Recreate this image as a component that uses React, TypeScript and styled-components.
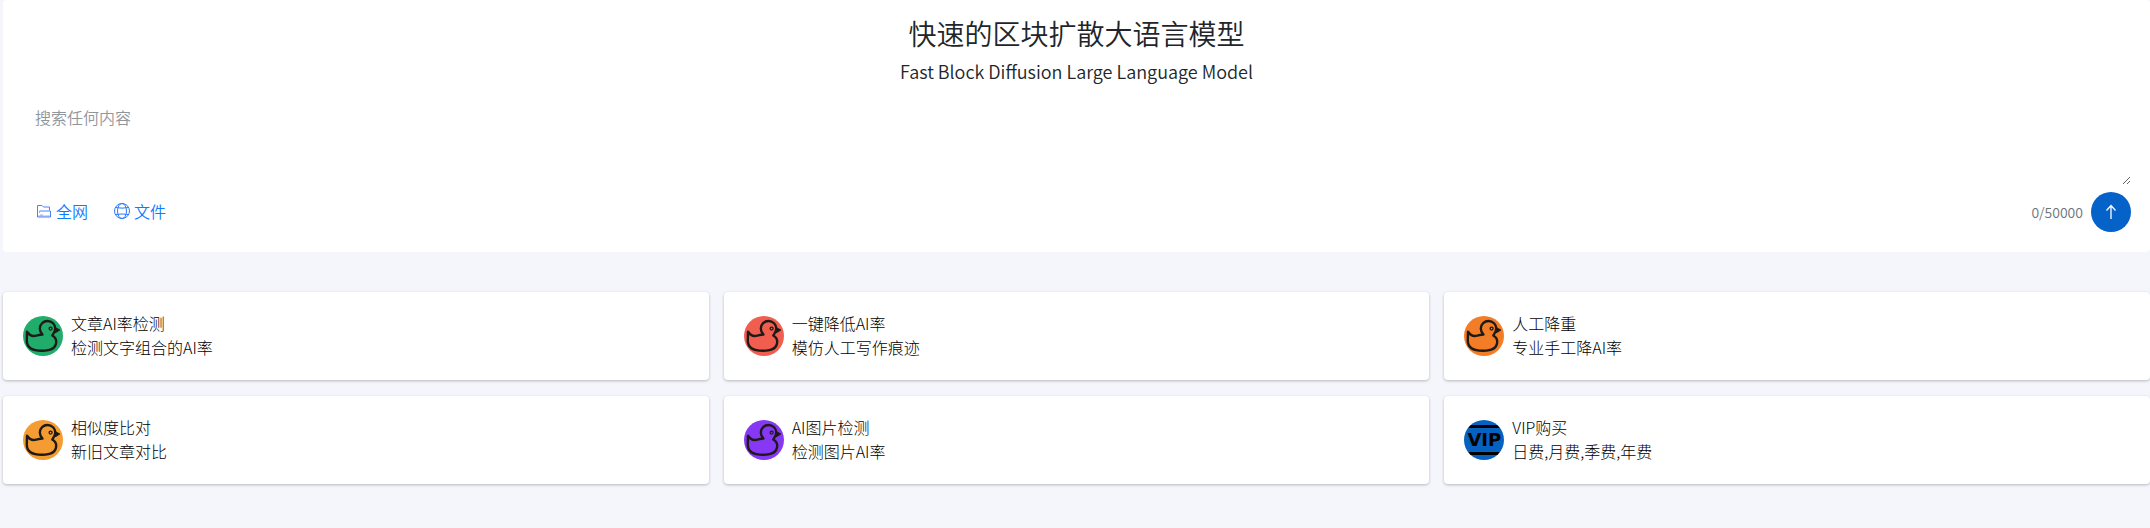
import React, { useState } from "react";
import styled, { createGlobalStyle } from "styled-components";

const GlobalStyle = createGlobalStyle`
  *, *::before, *::after { box-sizing: border-box; }
  body {
    margin: 0;
    background: #f4f6fb;
    color: #212529;
    font-family: "Noto Sans CJK SC", "Noto Sans", sans-serif;
    font-size: 16px;
    font-weight: 350;
    line-height: 24px;
  }
`;

const Page = styled.main`
  padding-left: 3px;
  padding-bottom: 40px;
`;

const SearchPanel = styled.form`
  padding: 13px 19px 20px;
  background: #fff;
  border-radius: 4px;
`;

const Title = styled.h1`
  margin: 0;
  font-size: 28px;
  font-weight: 350;
  line-height: 40px;
  text-align: center;
`;

const Subtitle = styled.p`
  margin: 4px 0 0;
  font-size: 18px;
  line-height: 28px;
  text-align: center;
`;

const Query = styled.textarea`
  display: block;
  width: 100%;
  height: 86px;
  margin: 14px 0 7px;
  padding: 6px 13px;
  border: 0;
  outline: 0;
  background: transparent;
  color: inherit;
  font: inherit;
  resize: vertical;
  &::placeholder { color: #90969c; opacity: 1; }
`;

const Toolbar = styled.div`
  display: flex;
  align-items: center;
  padding-left: 14px;
`;

const Source = styled.a`
  display: flex;
  align-items: center;
  gap: 4px;
  margin-right: 26px;
  padding-bottom: 2px;
  color: #0d7cff;
  text-decoration: none;
`;

const Counter = styled.span`
  margin-left: auto;
  margin-right: 8px;
  color: #6c757d;
  font-size: 14px;
`;

const Send = styled.button`
  display: flex;
  align-items: center;
  justify-content: center;
  width: 40px;
  height: 40px;
  padding: 0;
  border: 0;
  border-radius: 50%;
  background: #0562c9;
  color: #fff;
`;

const Services = styled.nav`
  display: grid;
  grid-template-columns: repeat(3, 1fr);
  gap: 16px 15px;
  margin-top: 40px;
`;

const Card = styled.a`
  display: flex;
  align-items: center;
  gap: 8px;
  padding: 19px 20px 21px;
  border-radius: 4px;
  background: #fff;
  box-shadow: 0 1px 3px rgba(0, 0, 0, 0.26);
  color: #000;
  font-weight: 300;
  text-decoration: none;

  > :first-child { margin-top: 2px; }
`;

const CardText = styled.div`
  display: flex;
  flex-direction: column;
`;

const FolderIcon = () => (
  <svg width="16" height="16" viewBox="0 0 16 16" fill="none" stroke="#4c83fb" aria-hidden="true">
    <path d="M1.500 14V2.500h4.500l1.500 1.500h6v3.500M3.500 8h11v6H1.500" strokeLinejoin="round" />
    <path d="M3.500 8v2M4 12h3M2 13h12" strokeOpacity=".6" />
  </svg>
);

const GlobeIcon = () => (
  <svg width="16" height="16" viewBox="0 0 16 16" fill="none" stroke="#2f78fa" aria-hidden="true">
    <circle cx="8" cy="8" r="7.500" />
    <ellipse cx="8" cy="8" rx="4.500" ry="7.500" />
    <path d="M1.500 4.500Q8 5.800 14.500 4.500M1.500 11.500Q8 10.500 14.500 11.500" />
  </svg>
);

const ArrowIcon = () => (
  <svg width="16" height="16" viewBox="0 0 16 16" fill="none" stroke="currentColor" strokeWidth="1.300" aria-hidden="true">
    <path d="M8 15V1.500M3.500 6.500 8 1.500l4.500 5" />
  </svg>
);

const DuckIcon = ({ color }: { color: string }) => (
  <svg width="40" height="40" viewBox="0 0 40 40" aria-hidden="true">
    <circle cx="20" cy="20" r="20" fill={color} />
    <g fill="none" stroke="#1d1a18" strokeWidth="2.400" strokeLinejoin="round" strokeLinecap="round">
      <path d="M4 15.800C5.500 18 7.500 20 10.500 20C13.500 20 15.500 18.500 19.500 18.500C17.500 16.500 16.800 14.500 16.800 12.500C16.800 8 20.500 5 24.500 5C29 5 32.300 8.500 32.300 12.500C32.300 15.500 31 17.200 29.300 19.500C32 21 33.200 22.800 33.200 25.500C33.200 32 27.500 34.800 19 34.800C9 34.800 3.800 31.500 3.800 24.500Z" />
      <path d="M32.800 12 36.500 14 32.500 16.500Z" fill="#1d1a18" strokeWidth="1.200" />
      <circle cx="27.600" cy="12.600" r="1.500" strokeWidth="1.300" />
    </g>
  </svg>
);

const VipBadge = styled.div`
  display: flex;
  align-items: center;
  justify-content: center;
  width: 40px;
  height: 40px;
  border-radius: 50%;
  background: linear-gradient(
    #0562c1 5px, #000 5px, #000 8px, #0562c1 8px,
    #0562c1 32px, #000 32px, #000 35px, #0562c1 35px
  );
  color: #000;
  font-family: "DejaVu Sans", sans-serif;
  font-size: 18px;
  font-weight: 700;
`;

const services = [
  { name: "文章AI率检测", note: "检测文字组合的AI率", color: "#20ad6b" },
  { name: "一键降低AI率", note: "模仿人工写作痕迹", color: "#f15e4f" },
  { name: "人工降重", note: "专业手工降AI率", color: "#f37d26" },
  { name: "相似度比对", note: "新旧文章对比", color: "#f49b31" },
  { name: "AI图片检测", note: "检测图片AI率", color: "#8738f5" },
  { name: "VIP购买", note: "日费,月费,季费,年费" },
];

export default function App() {
  const [query, setQuery] = useState("");
  return (
    <Page>
      <GlobalStyle />
      <SearchPanel onSubmit={(e) => e.preventDefault()}>
        <Title>快速的区块扩散大语言模型</Title>
        <Subtitle>Fast Block Diffusion Large Language Model</Subtitle>
        <Query
          aria-label="搜索任何内容"
          placeholder="搜索任何内容"
          maxLength={50000}
          value={query}
          onChange={(e) => setQuery(e.target.value)}
        />
        <Toolbar>
          <Source href="#web"><FolderIcon />全网</Source>
          <Source href="#file"><GlobeIcon />文件</Source>
          <Counter>{query.length}/50000</Counter>
          <Send type="submit" aria-label="搜索"><ArrowIcon /></Send>
        </Toolbar>
      </SearchPanel>
      <Services>
        {services.map(({ name, note, color }) => (
          <Card href="#service" key={name}>
            {color ? <DuckIcon color={color} /> : <VipBadge aria-hidden="true">VIP</VipBadge>}
            <CardText>
              <span>{name}</span>
              <span>{note}</span>
            </CardText>
          </Card>
        ))}
      </Services>
    </Page>
  );
}
